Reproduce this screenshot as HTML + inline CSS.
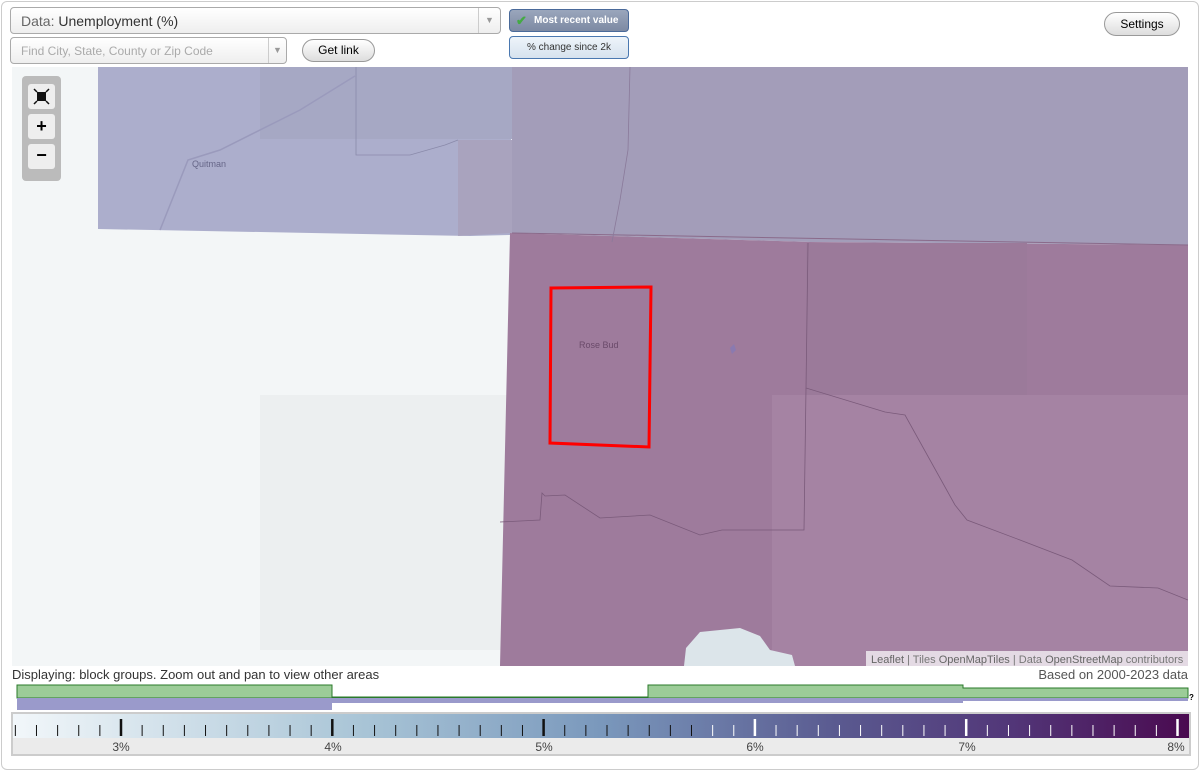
<!DOCTYPE html>
<html><head><style>
body{margin:0;width:1200px;height:771px;background:#fff;font-family:"Liberation Sans",sans-serif;position:relative;overflow:hidden}
.frame{position:absolute;left:1px;top:1px;width:1196px;height:767px;border:1px solid #ccc;border-radius:6px}
.abs{position:absolute}
.sel{border:1px solid #aaa;border-radius:4px;background:linear-gradient(#fff,#eee);box-sizing:border-box}
.btn{border:1px solid #999;border-radius:12px;background:linear-gradient(#fff,#ddd);font-size:12px;text-align:center;box-sizing:border-box}
</style></head><body>
<div class="frame"></div>
<div class="abs sel" style="left:10px;top:7px;width:491px;height:27px;font-size:14px;padding:5px 0 0 10px;color:#666">Data: <span style="color:#333">Unemployment (%)</span>
<div class="abs" style="right:0;top:0;width:21px;height:25px;border-left:1px solid #ccc;color:#999;font-size:9px;text-align:center;line-height:25px">▼</div></div>
<div class="abs sel" style="left:10px;top:37px;width:277px;height:27px;font-size:12px;padding:6px 0 0 10px;color:#aaa">Find City, State, County or Zip Code
<div class="abs" style="right:0;top:0;width:17px;height:25px;border-left:1px solid #ccc;color:#999;font-size:9px;text-align:center;line-height:25px">▼</div></div>
<div class="abs btn" style="left:302px;top:39px;width:73px;height:23px;line-height:21px">Get link</div>
<div class="abs" style="left:509px;top:9px;width:120px;height:23px;border:1px solid #4a6a9a;border-radius:4px;background:linear-gradient(#9aa6bc,#7d8aa3);color:#fff;font-size:10px;font-weight:bold;line-height:21px;box-sizing:border-box;padding-left:24px">Most recent value<span class="abs" style="left:6px;top:0;color:#4a4;font-size:13px">✔</span></div>
<div class="abs" style="left:509px;top:36px;width:120px;height:23px;border:1px solid #4a78b0;border-radius:4px;background:linear-gradient(#eef4fa,#d6e2ee);color:#333;font-size:10px;line-height:21px;text-align:center;box-sizing:border-box">% change since 2k</div>
<div class="abs btn" style="left:1104px;top:12px;width:76px;height:24px;line-height:22px">Settings</div>

<svg class="abs" style="left:12px;top:67px" width="1176" height="599" viewBox="12 67 1176 599">
<rect x="12" y="67" width="1176" height="599" fill="#f3f6f7"/>
<rect x="260" y="395" width="255" height="255" fill="#eceff0"/>
<polygon points="98,67 512,67 510,235 470,236 98,229" fill="#acaecc"/>
<rect x="260" y="67" width="252" height="72" fill="#a6a8c4"/>
<polygon points="512,67 1188,67 1188,245 810,242 512,233" fill="#a39db9"/>
<polygon points="458,140 512,140 512,233 458,236" fill="#a9a3be"/>
<polygon points="510,233 810,242 1188,245 1188,666 500,666" fill="#9e7b9c"/>
<rect x="806" y="243" width="221" height="152" fill="#9b7a9a"/>
<rect x="772" y="395" width="416" height="271" fill="#a583a3"/>
<path d="M512,233 L1188,245" stroke="#8a6a8a" stroke-width="1" fill="none"/>
<path d="M808,243 L806,388 L885,412 L905,415 L955,505 L967,520 L1020,540 L1072,560 L1110,586 L1158,588 L1188,600" stroke="#7a5a7a" fill="none" stroke-width="0.8"/>
<path d="M806,388 L804,530 L722,530 L700,535 L650,515 L600,518 L565,495 L545,496 L542,493 L540,520 L500,522" stroke="#7a5a7a" fill="none" stroke-width="0.8"/>
<path d="M630,67 L628,150 L620,200 L612,242" stroke="#8a7a9a" fill="none" stroke-width="0.8"/>
<path d="M356,67 L356,155 L410,155 L445,145 L458,140" stroke="#8a8aaa" fill="none" stroke-width="0.8"/>
<path d="M160,230 L188,160 L220,150 L300,110 L355,76" stroke="#9a9abc" fill="none" stroke-width="1.5"/>
<polygon points="700,632 740,628 760,636 770,650 792,655 795,666 684,666 686,648" fill="#dce5ea"/>
<path d="M730,348 l4,-4 l2,6 l-4,4z" fill="#8a7ab0"/>
<text x="192" y="167" font-size="9" fill="#666688" font-family="Liberation Sans">Quitman</text>
<text x="579" y="348" font-size="9" fill="#6a4a6a" font-family="Liberation Sans">Rose Bud</text>
<polygon points="551,288 651,287 649,447 550,443" fill="none" stroke="#ff0000" stroke-width="3"/>
<rect x="866" y="651" width="322" height="15" fill="rgba(255,255,255,0.7)"/>
<text x="871" y="663" font-size="11" fill="#777" font-family="Liberation Sans"><tspan fill="#666">Leaflet</tspan> | Tiles <tspan fill="#666">OpenMapTiles</tspan> | Data <tspan fill="#666">OpenStreetMap</tspan> contributors</text>
</svg>
<div class="abs" style="left:22px;top:76px;width:39px;height:105px;background:#bbb;border-radius:4px"></div>
<div class="abs" style="left:28px;top:84px;width:27px;height:25px;background:#eee;border-radius:3px">
<svg width="27" height="25"><rect x="9" y="8" width="9" height="9" fill="#111"/><path d="M6,5 l3,3 M21,5 l-3,3 M6,20 l3,-3 M21,20 l-3,-3" stroke="#111" stroke-width="1.5"/></svg></div>
<div class="abs" style="left:28px;top:114px;width:27px;height:25px;background:#eee;border-radius:3px;text-align:center;font-weight:bold;font-size:18px;line-height:24px">+</div>
<div class="abs" style="left:28px;top:144px;width:27px;height:25px;background:#eee;border-radius:3px;text-align:center;font-weight:bold;font-size:18px;line-height:22px">−</div>

<div class="abs" style="left:12px;top:667px;font-size:13px;color:#333">Displaying: block groups. Zoom out and pan to view other areas</div>
<div class="abs" style="right:12px;top:667px;font-size:13px;color:#555">Based on 2000-2023 data</div>
<svg class="abs" style="left:0;top:680px" width="1200" height="34">
<path d="M17,5 H332 V17 H648 V5 H963 V8 H1188 V18 H17Z" fill="#9ccc98" stroke="#2a7a2a" stroke-width="1"/>
<rect x="17" y="18" width="315" height="12" fill="#9a9acb"/>
<rect x="332" y="18" width="631" height="5" fill="#9a9acb"/>
<rect x="963" y="18" width="225" height="3" fill="#9a9acb"/>
<text x="1189" y="20" font-size="8" font-weight="bold">?</text>
</svg>
<div class="abs" style="left:11px;top:712px;width:1180px;height:44px;background:#ebebeb;border:2px solid #ccc;box-sizing:border-box"></div>
<svg class="abs" style="left:13px;top:714px" width="1176" height="40">
<defs><linearGradient id="g"><stop offset="0" stop-color="#f2f7fa"/><stop offset="0.3" stop-color="#a8c4d6"/><stop offset="0.5" stop-color="#7a98bc"/><stop offset="0.7" stop-color="#5a5a90"/><stop offset="0.85" stop-color="#523678"/><stop offset="1" stop-color="#4a0a50"/></linearGradient></defs>
<rect x="0" y="0" width="1176" height="24" fill="url(#g)"/>
<g id="t"></g>
<g font-size="12" fill="#444" text-anchor="middle" font-family="Liberation Sans">
<text x="108" y="37">3%</text><text x="320" y="37">4%</text><text x="531" y="37">5%</text><text x="742" y="37">6%</text><text x="954" y="37">7%</text><text x="1163" y="37">8%</text></g>
</svg>
<script>
var g=document.getElementById('t'),s='';
for(var i=-5;i<=50;i++){var x=108+i*21.13;if(x<2||x>1175)continue;var maj=i%10==0;var c=x>680?'#fff':'#111';
s+='<line x1="'+x+'" x2="'+x+'" y1="'+(maj?5:11)+'" y2="22" stroke="'+c+'" stroke-width="'+(maj?2.5:1)+'"/>';}
g.innerHTML=s;
</script>
</body></html>
